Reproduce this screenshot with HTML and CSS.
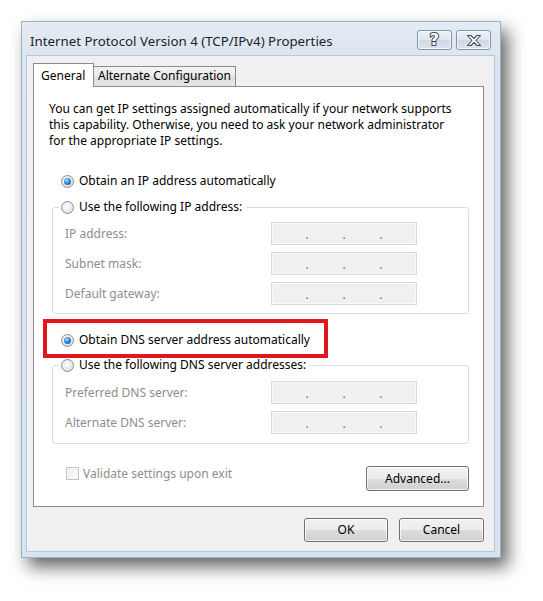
FILE: index.html
```html
<!DOCTYPE html>
<html lang="en">
<head>
<meta charset="utf-8">
<title>Internet Protocol Version 4 (TCP/IPv4) Properties</title>
<link rel="stylesheet" href="styles.css">
</head>
<body>
<div class="stage">
  <div class="window">
    <div class="titlebar">
      <div class="title">Internet Protocol Version 4 (TCP/IPv4) Properties</div>
      <div class="caption-buttons">
        <div class="cap-btn"><span class="help-glyph">?</span></div>
        <div class="cap-btn">
          <svg width="16" height="13" viewBox="0 0 16 13"><path d="M1.5 1.5 L5 1.5 L8 4.6 L11 1.5 L14.5 1.5 L10 6.5 L14.5 11.5 L11 11.5 L8 8.4 L5 11.5 L1.5 11.5 L6 6.5 Z" fill="#fff" stroke="#454b55" stroke-width="1.1" stroke-linejoin="round"/></svg>
        </div>
      </div>
    </div>
    <div class="client">
      <div class="tabs">
        <div class="tab active">General</div>
        <div class="tab">Alternate Configuration</div>
      </div>
      <div class="panel">
        <p class="intro">You can get IP settings assigned automatically if your network supports<br>this capability. Otherwise, you need to ask your network administrator<br>for the appropriate IP settings.</p>

        <div class="option first"><span class="radio checked"></span><span>Obtain an IP address automatically</span></div>

        <fieldset class="group ip-group">
          <legend><span class="option"><span class="radio"></span><span>Use the following IP address:</span></span></legend>
          <div class="field"><span class="label">IP address:</span><span class="ipbox"><span>.</span><span>.</span><span>.</span></span></div>
          <div class="field"><span class="label">Subnet mask:</span><span class="ipbox"><span>.</span><span>.</span><span>.</span></span></div>
          <div class="field"><span class="label">Default gateway:</span><span class="ipbox"><span>.</span><span>.</span><span>.</span></span></div>
        </fieldset>

        <div class="option dns-auto"><span class="highlight"></span><span class="radio checked"></span><span>Obtain DNS server address automatically</span></div>

        <fieldset class="group dns-group">
          <legend><span class="option"><span class="radio"></span><span>Use the following DNS server addresses:</span></span></legend>
          <div class="field"><span class="label">Preferred DNS server:</span><span class="ipbox"><span>.</span><span>.</span><span>.</span></span></div>
          <div class="field"><span class="label">Alternate DNS server:</span><span class="ipbox"><span>.</span><span>.</span><span>.</span></span></div>
        </fieldset>

        <div class="bottom-row">
          <div class="check-option"><span class="checkbox"></span><span>Validate settings upon exit</span></div>
          <div class="btn advanced">Advanced...</div>
        </div>
      </div>
      <div class="dialog-buttons">
        <div class="btn">OK</div>
        <div class="btn">Cancel</div>
      </div>
    </div>
  </div>
</div>
</body>
</html>
```

FILE: styles.css
```css
* { box-sizing: border-box; }
html, body { margin: 0; padding: 0; background: #ffffff; }
body {
  font-family: "Noto Sans", "Open Sans", sans-serif;
  font-size: 12px;
  color: #000;
}
.stage { padding: 21px 0 0 21px; width: 543px; height: 601px; }

.window {
  width: 480px;
  height: 537px;
  border: 1px solid #9eb0c4;
  background: linear-gradient(#e4ebf2, #d9e5f2 40px, #d6e3f1);
  box-shadow: 7px 9px 16px rgba(0,0,0,0.6);
  display: flex;
  flex-direction: column;
  padding: 0 5px 5px 4px;
}

.titlebar {
  height: 33px;
  display: flex;
  justify-content: space-between;
  align-items: flex-start;
}
.title {
  padding: 10px 0 0 4px;
  font-size: 13.3px;
  color: #1f1f1f;
  line-height: 18px;
}
.caption-buttons {
  display: flex;
  gap: 4px;
  padding-top: 8px;
  margin-right: 4px;
}
.cap-btn {
  width: 35px;
  height: 20px;
  border: 1px solid #8494a8;
  border-radius: 3px;
  background: linear-gradient(#eef2f7, #dde5ee 50%, #cfd9e5 51%, #dbe4ee);
  box-shadow: inset 0 0 0 1px rgba(255,255,255,0.7);
  display: flex;
  align-items: center;
  justify-content: center;
}
.help-glyph {
  font-family: "DejaVu Sans", sans-serif;
  font-weight: bold;
  font-size: 16px;
  line-height: 16px;
  color: #fff;
  -webkit-text-stroke: 2px #454b55;
  paint-order: stroke fill;
}

.client {
  flex: 1;
  background: #f0f0f0;
  border: 1px solid #b9c8d8;
  padding: 7px 10px 9px 6px;
  display: flex;
  flex-direction: column;
}

.tabs {
  height: 23px;
  display: flex;
  align-items: flex-end;
}
.tab {
  border: 1px solid #898c95;
  border-bottom: none;
  padding: 0 4px;
  font-size: 12px;
  line-height: 18px;
  height: 20px;
  background: linear-gradient(#f3f3f3, #ebebeb 50%, #dedede 51%, #e6e6e6);
  margin-left: -1px;
  white-space: nowrap;
}
.tab.active {
  height: 24px;
  margin-left: 0;
  margin-bottom: -1px;
  position: relative;
  z-index: 1;
  background: #fff;
  padding: 3px 7px 0 7px;
  width: 61px;
}

.panel {
  flex: 1;
  background: #fff;
  border: 1px solid #898c95;
  padding: 14px 14px 15px 15px;
  display: flex;
  flex-direction: column;
}

.intro {
  margin: 0;
  line-height: 16px;
  white-space: nowrap;
}

.option {
  display: flex;
  align-items: center;
  gap: 5px;
  height: 16px;
  line-height: 16px;
  white-space: nowrap;
}
.option.first { margin: 24px 0 0 12px; }
.option.dns-auto { margin: 18px 0 0 12px; position: relative; }

.radio {
  width: 13px;
  height: 13px;
  border-radius: 50%;
  border: 1px solid #8a8f97;
  background: radial-gradient(circle at 45% 40%, #ffffff, #e6e6e6 60%, #cfd2d6);
  flex: none;
  position: relative;
}
.radio.checked::after {
  content: "";
  position: absolute;
  left: 2px;
  top: 2px;
  width: 7px;
  height: 7px;
  border-radius: 50%;
  background: radial-gradient(circle at 40% 35%, #a9dcff, #2b82d4 50%, #0f4c8f);
}

.highlight {
  position: absolute;
  left: -18px;
  top: -13px;
  width: 285px;
  height: 39px;
  border: 4px solid #e3161e;
  pointer-events: none;
}

.group {
  margin: 0 0 0 3px;
  border: 1px solid #d5dfe5;
  border-radius: 3px;
  padding: 7px 0 8px 6px;
  min-width: 0;
  display: flex;
  flex-direction: column;
  gap: 7px;
}
.ip-group { margin-top: 10px; }
.dns-group { margin-top: 9px; padding-top: 8px; padding-bottom: 9px; }
.group legend {
  padding: 0 4px 0 2px;
  background: #fff;
}
.field {
  display: grid;
  grid-template-columns: 206px 146px;
  align-items: center;
  height: 23px;
  padding-left: 6px;
  color: #8e8e8e;
}
.ipbox {
  height: 23px;
  border: 1px solid #d9d9d9;
  background: #f0f0f0;
  box-shadow: inset 0 0 0 1px #f9f9f9;
  display: flex;
  justify-content: space-evenly;
  align-items: flex-end;
  color: #6f6f6f;
  font-size: 12px;
  line-height: 18px;
}

.bottom-row {
  margin-top: 22px;
  display: flex;
  justify-content: space-between;
  align-items: flex-start;
}
.check-option {
  display: flex;
  align-items: center;
  gap: 4px;
  color: #8e8e8e;
  margin: 0 0 0 17px;
  height: 14px;
}
.checkbox {
  width: 13px;
  height: 13px;
  border: 1px solid #c4c4c4;
  background: linear-gradient(135deg, #f0f0f0, #fafafa);
}

.btn {
  height: 24px;
  width: 85px;
  border: 1px solid #707070;
  border-radius: 3px;
  background: linear-gradient(#f2f2f2, #ebebeb 50%, #dddddd 51%, #cfcfcf);
  box-shadow: inset 0 0 0 1px rgba(255,255,255,0.75);
  display: flex;
  align-items: center;
  justify-content: center;
  line-height: 16px;
}
.btn.advanced { width: 103px; height: 25px; }

.dialog-buttons {
  margin-top: 11px;
  display: flex;
  justify-content: flex-end;
  gap: 11px;
}
.dialog-buttons .btn:first-child { width: 84px; }
```
